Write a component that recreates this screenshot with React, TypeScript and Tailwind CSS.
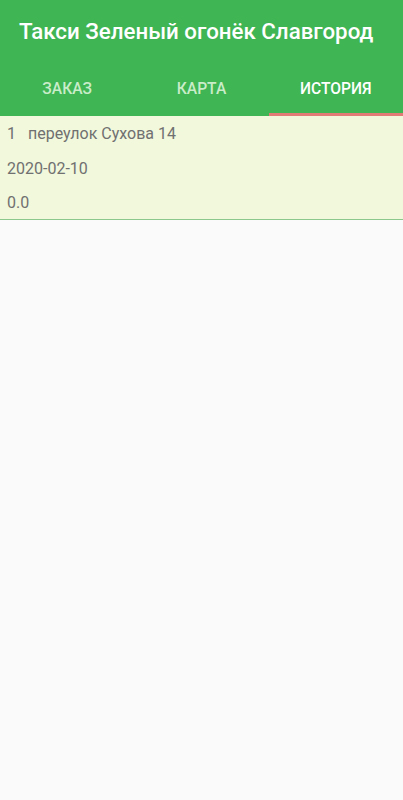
export default function App() {
  const tabs = ['ЗАКАЗ', 'КАРТА', 'ИСТОРИЯ'];
  const active = 2;
  return (
    <div className="min-h-[800px] bg-[#fafafa] font-['Roboto',sans-serif]">
      <div className="bg-[#3fb553]">
        <div className="h-[66px] pl-[19px] flex items-center">
          <h1 className="text-[22.3px] font-medium text-white leading-none pb-[4px]">Такси Зеленый огонёк Славгород</h1>
        </div>
        <div className="flex h-[50px]">
          {tabs.map((t, i) => (
            <div key={t} className="flex-1 flex flex-col">
              <div
                className={
                  'flex-1 flex items-center justify-center text-[15.6px] font-medium ' +
                  (i === active ? 'text-white' : 'text-[#c9ecc9]')
                }
              >
                {t}
              </div>
              <div className={'h-[3px] ' + (i === active ? 'bg-[#e27a75]' : '')} />
            </div>
          ))}
        </div>
      </div>
      <div className="bg-[#f1f8dc] border-b border-[#8cc88c] px-[7px] text-[16px] text-[#707070]">
        <div className="h-[35px] flex items-center gap-[12px]">
          <span>1</span>
          <span>переулок Сухова 14</span>
        </div>
        <div className="h-[35px] flex items-center">2020-02-10</div>
        <div className="h-[33px] flex items-center">0.0</div>
      </div>
    </div>
  );
}
